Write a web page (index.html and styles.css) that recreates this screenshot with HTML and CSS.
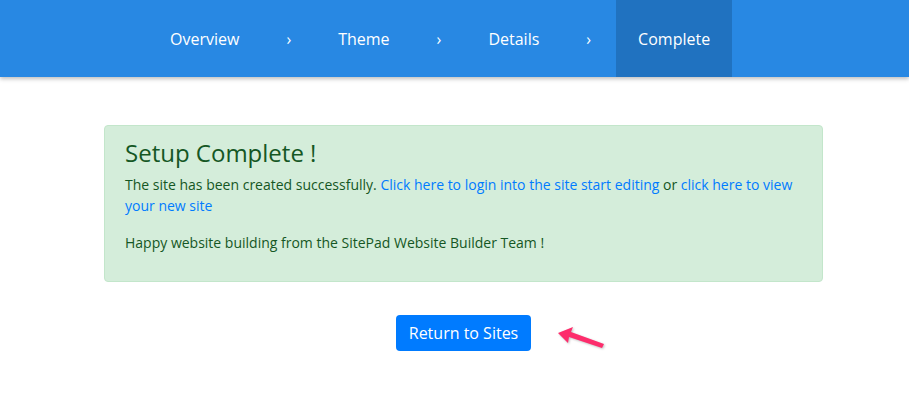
FILE: index.html
```html
<!DOCTYPE html>
<html lang="en">
<head>
    <meta charset="UTF-8">
    <title>Setup Complete</title>
    <link rel="stylesheet" href="styles.css">
</head>
<body>
    <div class="topbar">
        <ul class="steps">
            <li class="step">Overview</li>
            <li class="sep">&rsaquo;</li>
            <li class="step">Theme</li>
            <li class="sep">&rsaquo;</li>
            <li class="step">Details</li>
            <li class="sep">&rsaquo;</li>
            <li class="step active">Complete</li>
        </ul>
    </div>
    <div class="container">
        <div class="alert">
            <h2>Setup Complete !</h2>
            <p>The site has been created successfully. <a href="#">Click here to login into the site start editing</a> or <a href="#">click here to view your new site</a></p>
            <p>Happy website building from the SitePad Website Builder Team !</p>
        </div>
        <div class="actions">
            <button class="btn">Return to Sites</button>
            <svg class="pointer" width="50" height="26" viewBox="0 0 50 26">
                <path d="M2 7 L17 1 L15 6 L48 18 L46 22 L13 11 L12 17 Z" fill="#fd2d6c"/>
            </svg>
        </div>
    </div>
</body>
</html>
```

FILE: styles.css
```css
body {
    margin: 0;
    font-family: "Open Sans", Arial, sans-serif;
    background: #fff;
}
.topbar {
    height: 77px;
    background-color: #2888e3;
    box-shadow: 0 2px 4px rgba(0, 0, 0, 0.25);
}
.steps {
    list-style: none;
    margin: 0;
    padding: 0 0 0 148px;
    display: flex;
    height: 100%;
}
.steps li {
    display: flex;
    align-items: center;
    color: #fff;
    font-size: 16px;
}
.step {
    padding: 0 22px;
}
.step.active {
    background-color: #2072c0;
}
.sep {
    padding: 0 25px;
    font-size: 14px;
}
.container {
    width: 719px;
    margin: 48px 0 0 104px;
}
.alert {
    background-color: #d4edda;
    border: 1px solid #c3e6cb;
    border-radius: 4px;
    color: #155724;
    padding: 12px 20px 26px;
    height: 157px;
    box-sizing: border-box;
}
.alert h2 {
    margin: 0 0 6px;
    font-size: 24px;
    font-weight: 400;
    line-height: 30px;
}
.alert p {
    margin: 0 0 16px;
    font-size: 14px;
    line-height: 21px;
}
.alert a {
    color: #007bff;
    text-decoration: none;
}
.actions {
    position: relative;
    display: flex;
    justify-content: center;
    margin-top: 33px;
}
.btn {
    background-color: #007bff;
    color: #fff;
    border: none;
    border-radius: 4px;
    font-family: "Open Sans", Arial, sans-serif;
    font-size: 16px;
    height: 36px;
    width: 135px;
}
.pointer {
    position: absolute;
    left: 452px;
    top: 11px;
    filter: drop-shadow(1px 1px 1px rgba(0, 0, 0, 0.25));
}
```
